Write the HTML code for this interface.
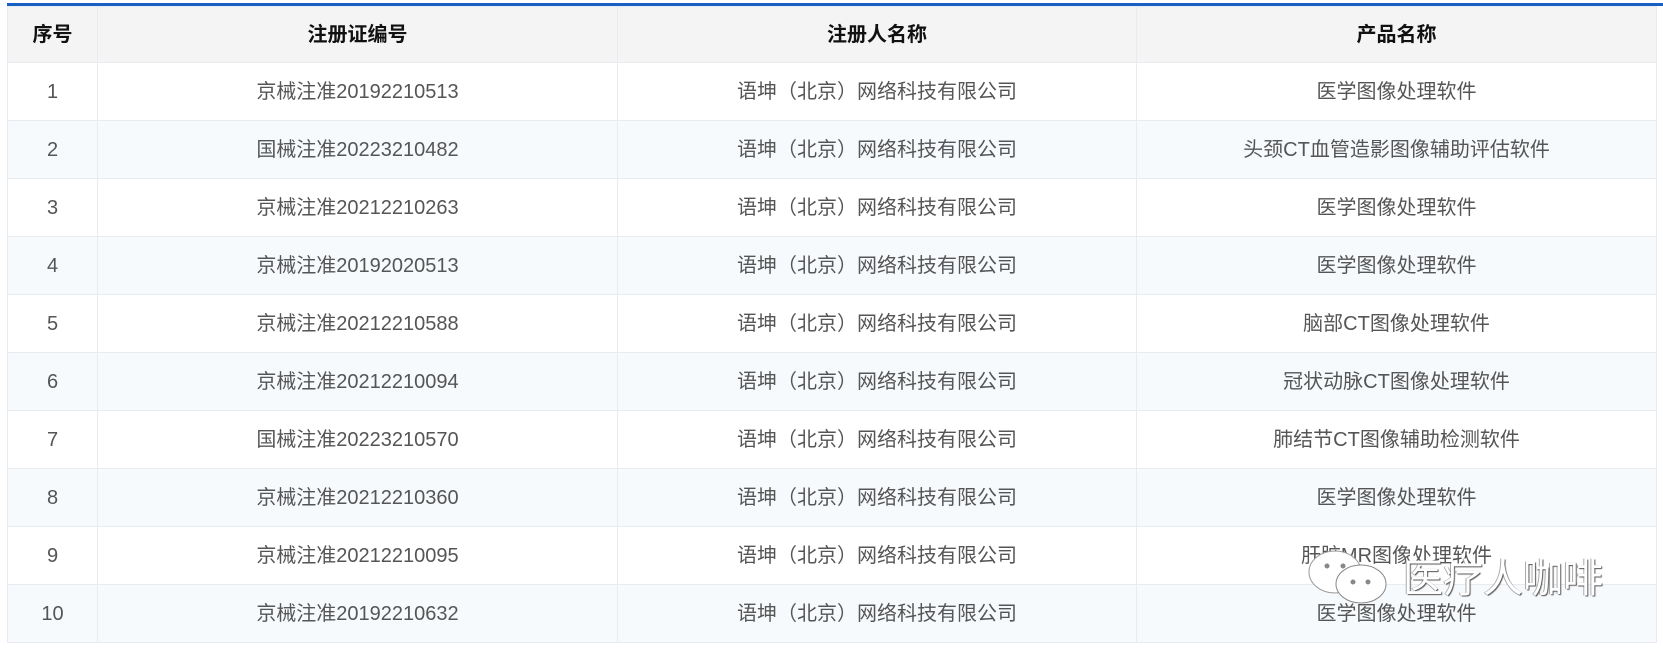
<!DOCTYPE html>
<html><head><meta charset="utf-8"><style>
body{margin:0;background:#fff;width:1663px;height:648px;overflow:hidden;font-family:"Liberation Sans","Noto Sans CJK SC",sans-serif;}
.top{position:absolute;left:7px;top:3px;width:1656px;height:3px;background:#1a5fc4;}
table{position:absolute;left:7px;top:6px;border-collapse:collapse;table-layout:fixed;width:1649px;}
td,th{border:1px solid #e8ebf0;text-align:center;vertical-align:middle;font-size:20px;color:#555;padding:0;height:57px;line-height:22px;white-space:nowrap;}
th{background:#f4f4f4;color:#111;font-weight:bold;height:55px;font-size:20px;}
tr:nth-child(odd) td{background:#f7fafd;}
.wm{position:absolute;font-size:40px;color:#fff;text-shadow:1px 1px 1px #555,-1px 0 0 #aaa;font-family:"Noto Sans CJK SC",sans-serif;line-height:42px;}
</style></head><body>
<div class="top"></div>
<table>
<colgroup><col style="width:90px"><col style="width:520px"><col style="width:519px"><col style="width:520px"></colgroup>
<tr><th>序号</th><th>注册证编号</th><th>注册人名称</th><th>产品名称</th></tr>
<tr><td>1</td><td>京械注准20192210513</td><td>语坤（北京）网络科技有限公司</td><td>医学图像处理软件</td></tr>
<tr><td>2</td><td>国械注准20223210482</td><td>语坤（北京）网络科技有限公司</td><td>头颈CT血管造影图像辅助评估软件</td></tr>
<tr><td>3</td><td>京械注准20212210263</td><td>语坤（北京）网络科技有限公司</td><td>医学图像处理软件</td></tr>
<tr><td>4</td><td>京械注准20192020513</td><td>语坤（北京）网络科技有限公司</td><td>医学图像处理软件</td></tr>
<tr><td>5</td><td>京械注准20212210588</td><td>语坤（北京）网络科技有限公司</td><td>脑部CT图像处理软件</td></tr>
<tr><td>6</td><td>京械注准20212210094</td><td>语坤（北京）网络科技有限公司</td><td>冠状动脉CT图像处理软件</td></tr>
<tr><td>7</td><td>国械注准20223210570</td><td>语坤（北京）网络科技有限公司</td><td>肺结节CT图像辅助检测软件</td></tr>
<tr><td>8</td><td>京械注准20212210360</td><td>语坤（北京）网络科技有限公司</td><td>医学图像处理软件</td></tr>
<tr><td>9</td><td>京械注准20212210095</td><td>语坤（北京）网络科技有限公司</td><td>肝脏MR图像处理软件</td></tr>
<tr><td>10</td><td>京械注准20192210632</td><td>语坤（北京）网络科技有限公司</td><td>医学图像处理软件</td></tr>
</table>
<svg style="position:absolute;left:1305px;top:546px" width="95" height="62"><ellipse cx="30" cy="26" rx="26" ry="21" fill="#fff" stroke="#999"/><ellipse cx="56" cy="38" rx="25" ry="19" fill="#fff" stroke="#888"/><circle cx="48" cy="36" r="2.5" fill="#888"/><circle cx="63" cy="36" r="2.5" fill="#888"/><circle cx="22" cy="20" r="2.5" fill="#888"/><circle cx="38" cy="20" r="2.5" fill="#888"/></svg>
<div class="wm" style="left:1403px;top:554px">医疗人咖啡</div>
</body></html>
